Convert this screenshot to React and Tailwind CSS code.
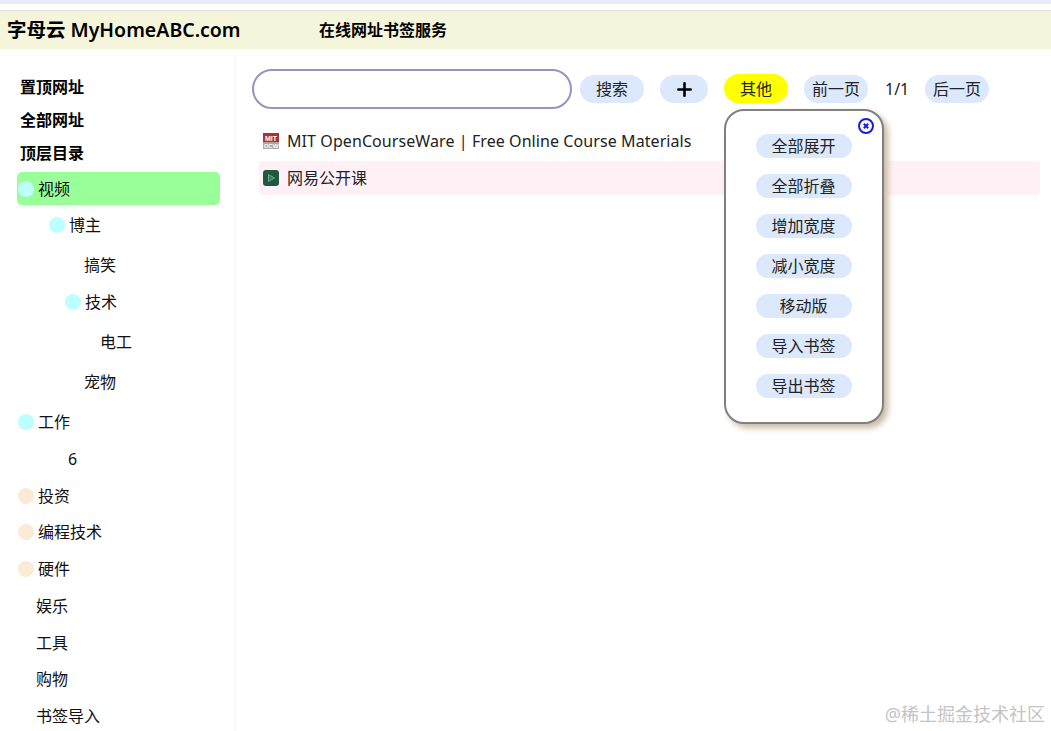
import { Plus } from 'lucide-react';

const treeRows = [
  { label: '博主', className: 'mt-[3px] pl-[49px]', dot: 'bg-[#bbffff]' },
  { label: '搞笑', className: 'mt-[7px] pl-[84px]' },
  { label: '技术', className: 'mt-1 pl-[65px]', dot: 'bg-[#bbffff]' },
  { label: '电工', className: 'mt-[7px] pl-[100px]' },
  { label: '宠物', className: 'mt-[7px] pl-[84px]' },
  { label: '工作', className: 'mt-[7px] pl-[18px]', dot: 'bg-[#bbffff]' },
  { label: '6', className: 'mt-1 pl-[68px]' },
  { label: '投资', className: 'mt-1 pl-[18px]', dot: 'bg-[#faebd7]' },
  { label: '编程技术', className: 'mt-[3px] pl-[18px]', dot: 'bg-[#faebd7]' },
  { label: '硬件', className: 'mt-1 pl-[18px]', dot: 'bg-[#faebd7]' },
  { label: '娱乐', className: 'mt-1 pl-9' },
  { label: '工具', className: 'mt-1 pl-9' },
  { label: '购物', className: 'mt-[3px] pl-9' },
  { label: '书签导入', className: 'mt-1 pl-9' },
];

const menuItems = ['全部展开', '全部折叠', '增加宽度', '减小宽度', '移动版', '导入书签', '导出书签'];

const TreeRow = ({ label, className, dot }) => (
  <div className={`flex h-[33px] items-center ${className}`}>
    {dot && <span className={`mr-1 h-4 w-4 shrink-0 rounded-full ${dot}`} />}
    <span>{label}</span>
  </div>
);

const PillButton = ({ children, className = '' }) => (
  <button className={`flex h-7 w-16 shrink-0 items-center justify-center rounded-full bg-[#dce8fb] text-[#222] ${className}`}>
    {children}
  </button>
);

const MitIcon = () => (
  <svg width="16" height="16" viewBox="0 0 16 16" className="shrink-0">
    <rect width="16" height="9" fill="#a5343a" />
    <rect y="9" width="16" height="7" fill="#a8a8a8" />
    <text x="8" y="7.5" textAnchor="middle" fontSize="7" fontWeight="700" fill="#fff" fontFamily="Liberation Sans, sans-serif">MIT</text>
    <text x="8" y="15" textAnchor="middle" fontSize="6" fontWeight="700" fill="#fff" fontFamily="Liberation Sans, sans-serif">OCW</text>
  </svg>
);

const PlayIcon = () => (
  <svg width="16" height="16" viewBox="0 0 16 16" className="shrink-0">
    <rect width="16" height="16" rx="3" fill="#1f5a40" />
    <path d="M5.5 4.5 L11.5 8 L5.5 11.5 Z" fill="#3d7a5c" stroke="#6fa58a" strokeWidth="1" />
  </svg>
);

const CloseIcon = () => (
  <svg width="16" height="16" viewBox="0 0 16 16">
    <circle cx="8" cy="8" r="7" fill="#fff" stroke="#1a1ae0" strokeWidth="2" />
    <path d="M5.8 5.8 L10.2 10.2 M10.2 5.8 L5.8 10.2" stroke="#1a1ae0" strokeWidth="2" />
  </svg>
);

export default function App() {
  return (
    <div className="relative h-[731px] overflow-hidden bg-white font-['Noto_Sans','Noto_Sans_CJK_SC',sans-serif] text-base text-[#111]">
      {/* Top strip */}
      <div className="h-1 bg-[#e9ebf7]" />

      {/* Header */}
      <header className="mt-1.5 flex h-[39px] items-center border-t border-[#e0e0e0] bg-[#f5f5dc] pl-2">
        <h1 className="-ml-px w-[312px] text-[19.5px] font-semibold text-black">字母云 MyHomeABC.com</h1>
        <span className="font-semibold text-black">在线网址书签服务</span>
      </header>

      <div className="flex">
        {/* Sidebar */}
        <aside className="mt-[7px] h-[680px] w-[236px] shrink-0 border-r-2 border-[#f5f7fb] pt-[14px]">
          <div className="flex h-[33px] items-center pl-5 font-semibold text-black">置顶网址</div>
          <div className="flex h-[33px] items-center pl-5 font-semibold text-black">全部网址</div>
          <div className="flex h-[33px] items-center pl-5 font-semibold text-black">顶层目录</div>
          <div className="mt-[3px] ml-[17px] flex h-[33px] w-[203px] items-center rounded-[5px] bg-[#99ff99] pl-px">
            <span className="mr-1 h-4 w-4 shrink-0 rounded-full bg-[#bbffff]" />
            <span>视频</span>
          </div>
          {treeRows.map((row) => (
            <TreeRow key={row.label} {...row} />
          ))}
        </aside>

        {/* Main */}
        <main className="flex-1 pt-5 pl-4">
          <div className="flex h-10 items-center">
            <input className="h-10 w-80 shrink-0 rounded-full border-2 border-[#9a93c0] bg-white outline-none" />
            <PillButton className="ml-2">搜索</PillButton>
            <PillButton className="ml-4 !w-12 text-black">
              <Plus size={21} strokeWidth={3} />
            </PillButton>
            <div className="relative ml-4 h-7">
              <PillButton className="-mt-px !h-[29px] !bg-[#ffff00]">其他</PillButton>
              {/* Popup menu */}
              <div className="absolute top-[34px] left-0 z-10 flex h-[315px] w-[160px] flex-col items-center gap-4 rounded-[20px] border-2 border-[#808080] bg-white pt-[23px] pr-px shadow-[4px_4px_6px_#c8b9a5]">
                <button className="absolute top-[7px] right-2">
                  <CloseIcon />
                </button>
                {menuItems.map((item) => (
                  <button key={item} className="flex h-6 w-24 shrink-0 items-center justify-center rounded-full bg-[#dce8fb] text-[#222]">
                    {item}
                  </button>
                ))}
              </div>
            </div>
            <PillButton className="ml-4">前一页</PillButton>
            <span className="ml-[17px] w-6 text-center text-[#222]">1/1</span>
            <PillButton className="ml-4">后一页</PillButton>
          </div>

          <div className="mt-[15px] ml-[7px] w-[781px]">
            <div className="flex h-[34px] items-center gap-2 pl-1 text-[#222]">
              <MitIcon />
              <span className="tracking-[0.08px]">MIT OpenCourseWare | Free Online Course Materials</span>
            </div>
            <div className="mt-[3px] flex h-[34px] items-center gap-2 rounded bg-[#fff0f5] pl-1 text-[#222]">
              <PlayIcon />
              <span>网易公开课</span>
            </div>
          </div>
        </main>
      </div>

      {/* Watermark */}
      <div className="absolute right-1.5 bottom-[3px] text-lg text-[#c4c4c4]">@稀土掘金技术社区</div>
    </div>
  );
}
